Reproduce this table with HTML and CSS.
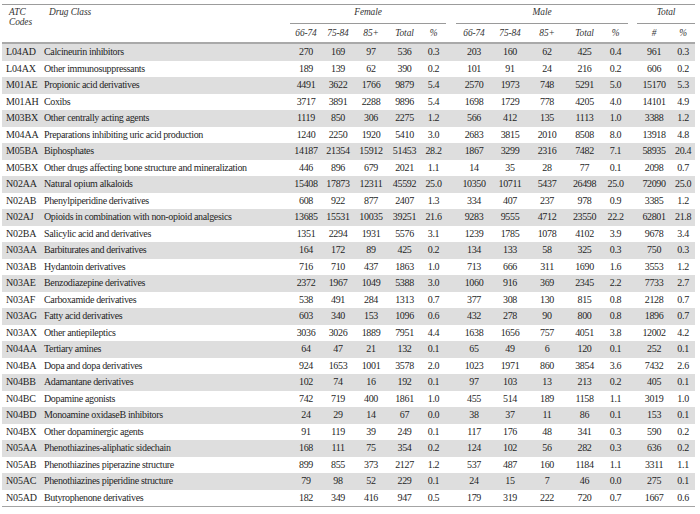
FILE: index.html
```html
<!DOCTYPE html>
<html lang="en">
<head>
<meta charset="utf-8">
<title>ATC drug classes by sex and age</title>
<link rel="stylesheet" href="styles.css">
</head>
<body>
<div class="wrap">
<table class="atc">
<colgroup>
<col class="c-code"><col class="c-name">
<col class="c-f1"><col class="c-f2"><col class="c-f3"><col class="c-f4"><col class="c-f5">
<col class="c-sp1">
<col class="c-m1"><col class="c-m2"><col class="c-m3"><col class="c-m4"><col class="c-m5">
<col class="c-sp2">
<col class="c-t1"><col class="c-t2">
</colgroup>
<thead>
<tr class="h1">
<th class="hcode" rowspan="2">ATC<br>Codes</th>
<th class="hname" rowspan="2">Drug Class</th>
<th class="grp" colspan="5">Female</th>
<th class="gap"></th>
<th class="grp" colspan="5">Male</th>
<th class="gap"></th>
<th class="grp" colspan="2">Total</th>
</tr>
<tr class="h2">
<th>66-74</th><th>75-84</th><th>85+</th><th>Total</th><th>%</th>
<th class="gap"></th>
<th>66-74</th><th>75-84</th><th>85+</th><th>Total</th><th>%</th>
<th class="gap"></th>
<th>#</th><th>%</th>
</tr>
</thead>
<tbody>
<tr><td class="code">L04AD</td><td class="name">Calcineurin inhibitors</td><td>270</td><td>169</td><td>97</td><td>536</td><td>0.3</td><td></td><td>203</td><td>160</td><td>62</td><td>425</td><td>0.4</td><td></td><td>961</td><td>0.3</td></tr>
<tr><td class="code">L04AX</td><td class="name">Other immunosuppressants</td><td>189</td><td>139</td><td>62</td><td>390</td><td>0.2</td><td></td><td>101</td><td>91</td><td>24</td><td>216</td><td>0.2</td><td></td><td>606</td><td>0.2</td></tr>
<tr><td class="code">M01AE</td><td class="name">Propionic acid derivatives</td><td>4491</td><td>3622</td><td>1766</td><td>9879</td><td>5.4</td><td></td><td>2570</td><td>1973</td><td>748</td><td>5291</td><td>5.0</td><td></td><td>15170</td><td>5.3</td></tr>
<tr><td class="code">M01AH</td><td class="name">Coxibs</td><td>3717</td><td>3891</td><td>2288</td><td>9896</td><td>5.4</td><td></td><td>1698</td><td>1729</td><td>778</td><td>4205</td><td>4.0</td><td></td><td>14101</td><td>4.9</td></tr>
<tr><td class="code">M03BX</td><td class="name">Other centrally acting agents</td><td>1119</td><td>850</td><td>306</td><td>2275</td><td>1.2</td><td></td><td>566</td><td>412</td><td>135</td><td>1113</td><td>1.0</td><td></td><td>3388</td><td>1.2</td></tr>
<tr><td class="code">M04AA</td><td class="name">Preparations inhibiting uric acid production</td><td>1240</td><td>2250</td><td>1920</td><td>5410</td><td>3.0</td><td></td><td>2683</td><td>3815</td><td>2010</td><td>8508</td><td>8.0</td><td></td><td>13918</td><td>4.8</td></tr>
<tr><td class="code">M05BA</td><td class="name">Biphosphates</td><td>14187</td><td>21354</td><td>15912</td><td>51453</td><td>28.2</td><td></td><td>1867</td><td>3299</td><td>2316</td><td>7482</td><td>7.1</td><td></td><td>58935</td><td>20.4</td></tr>
<tr><td class="code">M05BX</td><td class="name">Other drugs affecting bone structure and mineralization</td><td>446</td><td>896</td><td>679</td><td>2021</td><td>1.1</td><td></td><td>14</td><td>35</td><td>28</td><td>77</td><td>0.1</td><td></td><td>2098</td><td>0.7</td></tr>
<tr><td class="code">N02AA</td><td class="name">Natural opium alkaloids</td><td>15408</td><td>17873</td><td>12311</td><td>45592</td><td>25.0</td><td></td><td>10350</td><td>10711</td><td>5437</td><td>26498</td><td>25.0</td><td></td><td>72090</td><td>25.0</td></tr>
<tr><td class="code">N02AB</td><td class="name">Phenylpiperidine derivatives</td><td>608</td><td>922</td><td>877</td><td>2407</td><td>1.3</td><td></td><td>334</td><td>407</td><td>237</td><td>978</td><td>0.9</td><td></td><td>3385</td><td>1.2</td></tr>
<tr><td class="code">N02AJ</td><td class="name">Opioids in combination with non-opioid analgesics</td><td>13685</td><td>15531</td><td>10035</td><td>39251</td><td>21.6</td><td></td><td>9283</td><td>9555</td><td>4712</td><td>23550</td><td>22.2</td><td></td><td>62801</td><td>21.8</td></tr>
<tr><td class="code">N02BA</td><td class="name">Salicylic acid and derivatives</td><td>1351</td><td>2294</td><td>1931</td><td>5576</td><td>3.1</td><td></td><td>1239</td><td>1785</td><td>1078</td><td>4102</td><td>3.9</td><td></td><td>9678</td><td>3.4</td></tr>
<tr><td class="code">N03AA</td><td class="name">Barbiturates and derivatives</td><td>164</td><td>172</td><td>89</td><td>425</td><td>0.2</td><td></td><td>134</td><td>133</td><td>58</td><td>325</td><td>0.3</td><td></td><td>750</td><td>0.3</td></tr>
<tr><td class="code">N03AB</td><td class="name">Hydantoin derivatives</td><td>716</td><td>710</td><td>437</td><td>1863</td><td>1.0</td><td></td><td>713</td><td>666</td><td>311</td><td>1690</td><td>1.6</td><td></td><td>3553</td><td>1.2</td></tr>
<tr><td class="code">N03AE</td><td class="name">Benzodiazepine derivatives</td><td>2372</td><td>1967</td><td>1049</td><td>5388</td><td>3.0</td><td></td><td>1060</td><td>916</td><td>369</td><td>2345</td><td>2.2</td><td></td><td>7733</td><td>2.7</td></tr>
<tr><td class="code">N03AF</td><td class="name">Carboxamide derivatives</td><td>538</td><td>491</td><td>284</td><td>1313</td><td>0.7</td><td></td><td>377</td><td>308</td><td>130</td><td>815</td><td>0.8</td><td></td><td>2128</td><td>0.7</td></tr>
<tr><td class="code">N03AG</td><td class="name">Fatty acid derivatives</td><td>603</td><td>340</td><td>153</td><td>1096</td><td>0.6</td><td></td><td>432</td><td>278</td><td>90</td><td>800</td><td>0.8</td><td></td><td>1896</td><td>0.7</td></tr>
<tr><td class="code">N03AX</td><td class="name">Other antiepileptics</td><td>3036</td><td>3026</td><td>1889</td><td>7951</td><td>4.4</td><td></td><td>1638</td><td>1656</td><td>757</td><td>4051</td><td>3.8</td><td></td><td>12002</td><td>4.2</td></tr>
<tr><td class="code">N04AA</td><td class="name">Tertiary amines</td><td>64</td><td>47</td><td>21</td><td>132</td><td>0.1</td><td></td><td>65</td><td>49</td><td>6</td><td>120</td><td>0.1</td><td></td><td>252</td><td>0.1</td></tr>
<tr><td class="code">N04BA</td><td class="name">Dopa and dopa derivatives</td><td>924</td><td>1653</td><td>1001</td><td>3578</td><td>2.0</td><td></td><td>1023</td><td>1971</td><td>860</td><td>3854</td><td>3.6</td><td></td><td>7432</td><td>2.6</td></tr>
<tr><td class="code">N04BB</td><td class="name">Adamantane derivatives</td><td>102</td><td>74</td><td>16</td><td>192</td><td>0.1</td><td></td><td>97</td><td>103</td><td>13</td><td>213</td><td>0.2</td><td></td><td>405</td><td>0.1</td></tr>
<tr><td class="code">N04BC</td><td class="name">Dopamine agonists</td><td>742</td><td>719</td><td>400</td><td>1861</td><td>1.0</td><td></td><td>455</td><td>514</td><td>189</td><td>1158</td><td>1.1</td><td></td><td>3019</td><td>1.0</td></tr>
<tr><td class="code">N04BD</td><td class="name">Monoamine oxidaseB inhibitors</td><td>24</td><td>29</td><td>14</td><td>67</td><td>0.0</td><td></td><td>38</td><td>37</td><td>11</td><td>86</td><td>0.1</td><td></td><td>153</td><td>0.1</td></tr>
<tr><td class="code">N04BX</td><td class="name">Other dopaminergic agents</td><td>91</td><td>119</td><td>39</td><td>249</td><td>0.1</td><td></td><td>117</td><td>176</td><td>48</td><td>341</td><td>0.3</td><td></td><td>590</td><td>0.2</td></tr>
<tr><td class="code">N05AA</td><td class="name">Phenothiazines-aliphatic sidechain</td><td>168</td><td>111</td><td>75</td><td>354</td><td>0.2</td><td></td><td>124</td><td>102</td><td>56</td><td>282</td><td>0.3</td><td></td><td>636</td><td>0.2</td></tr>
<tr><td class="code">N05AB</td><td class="name">Phenothiazines piperazine structure</td><td>899</td><td>855</td><td>373</td><td>2127</td><td>1.2</td><td></td><td>537</td><td>487</td><td>160</td><td>1184</td><td>1.1</td><td></td><td>3311</td><td>1.1</td></tr>
<tr><td class="code">N05AC</td><td class="name">Phenothiazines piperidine structure</td><td>79</td><td>98</td><td>52</td><td>229</td><td>0.1</td><td></td><td>24</td><td>15</td><td>7</td><td>46</td><td>0.0</td><td></td><td>275</td><td>0.1</td></tr>
<tr><td class="code">N05AD</td><td class="name">Butyrophenone derivatives</td><td>182</td><td>349</td><td>416</td><td>947</td><td>0.5</td><td></td><td>179</td><td>319</td><td>222</td><td>720</td><td>0.7</td><td></td><td>1667</td><td>0.6</td></tr>
</tbody>
</table>
</div>
</body>
</html>
```
FILE: styles.css
```css
html, body {
  margin: 0;
  padding: 0;
  background: #ffffff;
}

.wrap {
  padding: 4px 5px 0 2px;
}

.atc {
  width: 693px;
  table-layout: fixed;
  border-collapse: separate;
  border-spacing: 0;
  border-top: 1px solid #9c9c9c;
  border-bottom: 1px solid #a4a4a4;
  font-family: "Liberation Serif", "Times New Roman", serif;
  font-size: 10px;
  color: #1f1f1f;
}

.c-code { width: 41px; }
.c-name { width: 247px; }
.c-f1 { width: 32px; }
.c-f2 { width: 32px; }
.c-f3 { width: 34px; }
.c-f4 { width: 33px; }
.c-f5 { width: 25px; }
.c-sp1 { width: 10px; }
.c-m1 { width: 36px; }
.c-m2 { width: 36px; }
.c-m3 { width: 38px; }
.c-m4 { width: 37px; }
.c-m5 { width: 25px; }
.c-sp2 { width: 9px; }
.c-t1 { width: 34px; }
.c-t2 { width: 24px; }

.atc th {
  font-style: italic;
  font-weight: normal;
  font-size: 9.4px;
  letter-spacing: -0.1px;
  color: #333333;
  padding: 0;
  line-height: 10px;
  text-align: center;
  white-space: nowrap;
}

.h1 { height: 19px; }
.h2 { height: 20px; }

.h1 th {
  vertical-align: top;
  padding-top: 2px;
}

.h1 .grp {
  border-bottom: 1px solid #9a9a9a;
}

.h1 .gap {
  padding: 0;
}

.atc .hcode {
  text-align: left;
  padding-left: 7px;
  border-bottom: 2px solid #a9a9a9;
}

.atc .hname {
  text-align: left;
  padding-left: 6px;
  border-bottom: 2px solid #a9a9a9;
}

.h2 th {
  vertical-align: middle;
  padding-bottom: 1px;
  border-bottom: 2px solid #a9a9a9;
}

.atc tbody tr {
  height: 16.5px;
}

.atc tbody tr:nth-child(odd) {
  background: #dedede;
}

.atc td {
  padding: 0;
  line-height: 10px;
  letter-spacing: -0.35px;
  text-align: center;
  vertical-align: middle;
  white-space: nowrap;
}

.atc td.code {
  text-align: left;
  padding-left: 4px;
  letter-spacing: -0.15px;
}

.atc td.name {
  text-align: left;
  padding-left: 1px;
}
```
